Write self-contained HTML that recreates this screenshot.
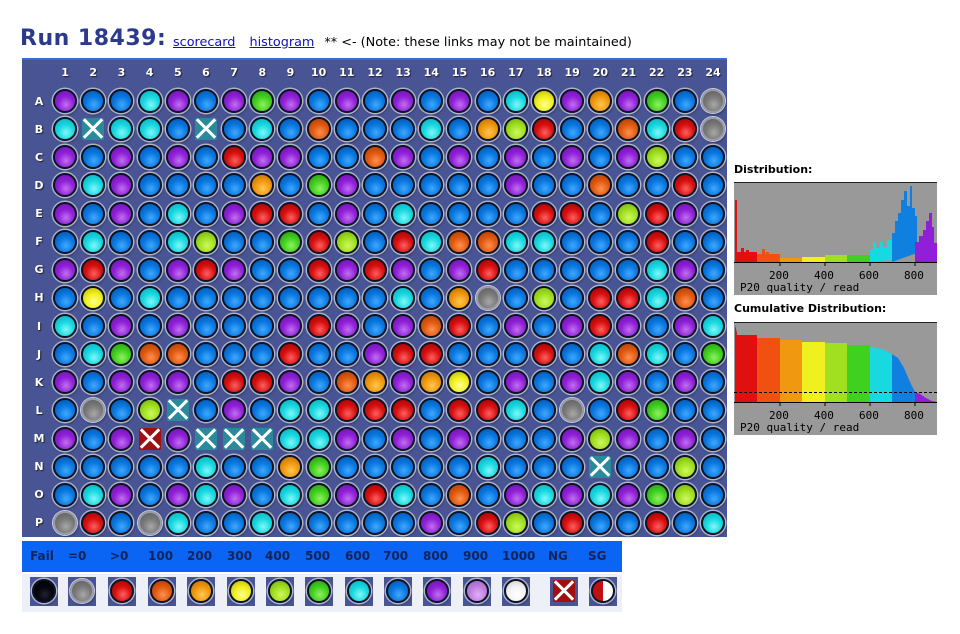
<!DOCTYPE html><html><head><meta charset="utf-8"><style>
body{margin:0;width:960px;height:634px;background:#fff;position:relative;overflow:hidden;font-family:"DejaVu Sans","Liberation Sans",sans-serif}
.t{position:absolute;left:20px;top:26px;font-size:22px;font-weight:bold;color:#2b3a8c;letter-spacing:0.5px}
.lk{position:absolute;left:173px;top:35px;font-size:12.8px;color:#000;white-space:nowrap}
.lk a{color:#1010c0;text-decoration:underline;margin-right:10px}
.pn{position:absolute;left:22px;top:58px;width:705px;height:479px;background:#485493;border-top:2px solid #3a6ad8;box-sizing:border-box}
.hd{position:absolute;top:66px;left:51px;display:grid;grid-template-columns:repeat(24,28.18px);color:#fff;font-weight:bold;font-size:11px;text-align:center;text-shadow:1px 1px 1px #223}
.rl{position:absolute;left:32px;top:87px;display:grid;grid-auto-rows:28.13px;color:#fff;font-weight:bold;font-size:11px;width:14px;text-align:center;align-items:center;text-shadow:1px 1px 1px #223}
.g{position:absolute;left:51px;top:87px;display:grid;grid-template-columns:repeat(24,28.18px);grid-auto-rows:28.13px}
.g i,.lg i{display:block;width:24px;height:24px;margin:2px;border-radius:50%;box-sizing:border-box;border:2px solid #0d1424;box-shadow:0 0 0 1.5px #aeb4cc,1px 2px 2px rgba(0,0,0,.35);background:radial-gradient(circle at 55% 68%,var(--l) 0,var(--c) 45%,var(--k) 100%);position:relative}
.p{--c:#9020d8;--l:#c070f0;--k:#6a10a8}
.b{--c:#0a78e0;--l:#40a8ff;--k:#0050a8}
.c{--c:#18d8e0;--l:#80f8f8;--k:#0aa8b8}
.g .gg,.gg{--c:#40d020;--l:#90f060;--k:#289010}
.l{--c:#a0e020;--l:#d0f860;--k:#70a810}
.y{--c:#f0f020;--l:#ffff90;--k:#b8b000}
.o{--c:#f09810;--l:#ffc850;--k:#b86800}
.r{--c:#e05a10;--l:#ff9050;--k:#a83800}
.d{--c:#d81010;--l:#ff6060;--k:#980000}
.g i.s,.lg i.s{border:2px solid #9a9ca8;--c:#7a7a7a;--l:#a8a8a8;--k:#5a5a5a;box-shadow:0 0 0 1px #ccd,1px 2px 2px rgba(0,0,0,.35)}
.g i.x,.g i.z,.lg i.z{border-radius:2px;border:none;box-shadow:none;background:#2a8a9c;width:22px;height:22px;margin:3px}
.g i.z,.lg i.z{background:#a01010}
.g i.x::before,.g i.x::after,.g i.z::before,.g i.z::after,.lg i.z::before,.lg i.z::after{content:"";position:absolute;left:-2px;top:9px;width:26px;height:3px;background:#fff;transform:rotate(45deg)}
.g i.x::after,.g i.z::after,.lg i.z::after{transform:rotate(-45deg)}
.lb{position:absolute;left:22px;top:541px;width:600px;height:31px;background:#0a64f4}
.lb span{position:absolute;top:8px;font-size:12px;font-weight:bold;color:#13235a}
.lr{position:absolute;left:22px;top:574px;width:600px;height:38px;background:#eef0f8}
.lg{position:absolute;top:577px;width:28px;height:29px;background:#485493}
.lg i{margin:2px}
.k0{--c:#050510;--l:#202030;--k:#000}
.w9{--c:#c080e0;--l:#e0b0f8;--k:#9860b8}
.wh{--c:#f4f4f4;--l:#fff;--k:#c8c8c8}
.sg{background:linear-gradient(90deg,#c01010 50%,#fff 50%)!important}
.cap{position:absolute;left:734px;font-size:11px;font-weight:bold;color:#000}
svg text{font-family:"DejaVu Sans Mono","Liberation Mono",monospace;font-size:11px}
</style></head><body>
<div class="t">Run 18439:</div>
<div class="lk"><a>scorecard</a> <a>histogram</a>** &lt;- (Note: these links may not be maintained)</div>
<div class="pn"></div>
<div class="hd"><span>1</span><span>2</span><span>3</span><span>4</span><span>5</span><span>6</span><span>7</span><span>8</span><span>9</span><span>10</span><span>11</span><span>12</span><span>13</span><span>14</span><span>15</span><span>16</span><span>17</span><span>18</span><span>19</span><span>20</span><span>21</span><span>22</span><span>23</span><span>24</span></div>
<div class="rl"><span>A</span><span>B</span><span>C</span><span>D</span><span>E</span><span>F</span><span>G</span><span>H</span><span>I</span><span>J</span><span>K</span><span>L</span><span>M</span><span>N</span><span>O</span><span>P</span></div>
<div class="g">
<i class=p></i><i class=b></i><i class=b></i><i class=c></i><i class=p></i><i class=b></i><i class=p></i><i class=gg></i><i class=p></i><i class=b></i><i class=p></i><i class=b></i><i class=p></i><i class=b></i><i class=p></i><i class=b></i><i class=c></i><i class=y></i><i class=p></i><i class=o></i><i class=p></i><i class=gg></i><i class=b></i><i class=s></i>
<i class=c></i><i class=x></i><i class=c></i><i class=c></i><i class=b></i><i class=x></i><i class=b></i><i class=c></i><i class=b></i><i class=r></i><i class=b></i><i class=b></i><i class=b></i><i class=c></i><i class=b></i><i class=o></i><i class=l></i><i class=d></i><i class=b></i><i class=b></i><i class=r></i><i class=c></i><i class=d></i><i class=s></i>
<i class=p></i><i class=b></i><i class=p></i><i class=b></i><i class=p></i><i class=b></i><i class=d></i><i class=p></i><i class=p></i><i class=b></i><i class=b></i><i class=r></i><i class=p></i><i class=b></i><i class=p></i><i class=b></i><i class=p></i><i class=b></i><i class=p></i><i class=b></i><i class=p></i><i class=l></i><i class=b></i><i class=b></i>
<i class=p></i><i class=c></i><i class=p></i><i class=b></i><i class=b></i><i class=b></i><i class=b></i><i class=o></i><i class=b></i><i class=gg></i><i class=p></i><i class=b></i><i class=b></i><i class=b></i><i class=b></i><i class=b></i><i class=p></i><i class=b></i><i class=b></i><i class=r></i><i class=b></i><i class=b></i><i class=d></i><i class=b></i>
<i class=p></i><i class=b></i><i class=p></i><i class=b></i><i class=c></i><i class=b></i><i class=p></i><i class=d></i><i class=d></i><i class=b></i><i class=p></i><i class=b></i><i class=c></i><i class=b></i><i class=b></i><i class=b></i><i class=b></i><i class=d></i><i class=d></i><i class=b></i><i class=l></i><i class=d></i><i class=p></i><i class=b></i>
<i class=b></i><i class=c></i><i class=b></i><i class=b></i><i class=c></i><i class=l></i><i class=b></i><i class=b></i><i class=gg></i><i class=d></i><i class=l></i><i class=b></i><i class=d></i><i class=c></i><i class=r></i><i class=r></i><i class=c></i><i class=c></i><i class=b></i><i class=b></i><i class=b></i><i class=d></i><i class=b></i><i class=b></i>
<i class=p></i><i class=d></i><i class=p></i><i class=b></i><i class=p></i><i class=d></i><i class=p></i><i class=b></i><i class=b></i><i class=d></i><i class=p></i><i class=d></i><i class=p></i><i class=b></i><i class=p></i><i class=d></i><i class=b></i><i class=b></i><i class=b></i><i class=b></i><i class=b></i><i class=c></i><i class=p></i><i class=b></i>
<i class=b></i><i class=y></i><i class=b></i><i class=c></i><i class=b></i><i class=b></i><i class=b></i><i class=b></i><i class=b></i><i class=b></i><i class=b></i><i class=b></i><i class=c></i><i class=b></i><i class=o></i><i class=s></i><i class=b></i><i class=l></i><i class=b></i><i class=d></i><i class=d></i><i class=c></i><i class=r></i><i class=b></i>
<i class=c></i><i class=b></i><i class=p></i><i class=b></i><i class=p></i><i class=b></i><i class=b></i><i class=b></i><i class=p></i><i class=d></i><i class=p></i><i class=b></i><i class=p></i><i class=r></i><i class=d></i><i class=b></i><i class=p></i><i class=b></i><i class=p></i><i class=d></i><i class=p></i><i class=b></i><i class=p></i><i class=c></i>
<i class=b></i><i class=c></i><i class=gg></i><i class=r></i><i class=r></i><i class=b></i><i class=b></i><i class=b></i><i class=d></i><i class=b></i><i class=b></i><i class=p></i><i class=d></i><i class=d></i><i class=b></i><i class=b></i><i class=b></i><i class=d></i><i class=b></i><i class=c></i><i class=r></i><i class=c></i><i class=b></i><i class=gg></i>
<i class=p></i><i class=b></i><i class=p></i><i class=p></i><i class=p></i><i class=b></i><i class=d></i><i class=d></i><i class=p></i><i class=b></i><i class=r></i><i class=o></i><i class=p></i><i class=o></i><i class=y></i><i class=b></i><i class=p></i><i class=b></i><i class=p></i><i class=c></i><i class=p></i><i class=b></i><i class=p></i><i class=b></i>
<i class=b></i><i class=s></i><i class=b></i><i class=l></i><i class=x></i><i class=b></i><i class=p></i><i class=b></i><i class=c></i><i class=c></i><i class=d></i><i class=d></i><i class=d></i><i class=b></i><i class=d></i><i class=d></i><i class=c></i><i class=b></i><i class=s></i><i class=b></i><i class=d></i><i class=gg></i><i class=b></i><i class=b></i>
<i class=p></i><i class=b></i><i class=p></i><i class=z></i><i class=p></i><i class=x></i><i class=x></i><i class=x></i><i class=c></i><i class=c></i><i class=p></i><i class=b></i><i class=p></i><i class=b></i><i class=p></i><i class=b></i><i class=b></i><i class=b></i><i class=p></i><i class=l></i><i class=p></i><i class=b></i><i class=p></i><i class=b></i>
<i class=b></i><i class=b></i><i class=b></i><i class=b></i><i class=b></i><i class=c></i><i class=b></i><i class=b></i><i class=o></i><i class=gg></i><i class=b></i><i class=b></i><i class=b></i><i class=b></i><i class=b></i><i class=c></i><i class=b></i><i class=b></i><i class=b></i><i class=x></i><i class=b></i><i class=b></i><i class=l></i><i class=b></i>
<i class=b></i><i class=c></i><i class=p></i><i class=b></i><i class=p></i><i class=c></i><i class=p></i><i class=b></i><i class=c></i><i class=gg></i><i class=p></i><i class=d></i><i class=c></i><i class=b></i><i class=r></i><i class=b></i><i class=p></i><i class=c></i><i class=p></i><i class=c></i><i class=p></i><i class=gg></i><i class=l></i><i class=b></i>
<i class=s></i><i class=d></i><i class=b></i><i class=s></i><i class=c></i><i class=b></i><i class=b></i><i class=c></i><i class=b></i><i class=b></i><i class=b></i><i class=b></i><i class=b></i><i class=p></i><i class=b></i><i class=d></i><i class=l></i><i class=b></i><i class=d></i><i class=b></i><i class=b></i><i class=d></i><i class=b></i><i class=c></i>
</div>
<div class="lb"><span style="left:8px">Fail</span><span style="left:46px">=0</span><span style="left:88px">&gt;0</span><span style="left:126px">100</span><span style="left:165px">200</span><span style="left:205px">300</span><span style="left:243px">400</span><span style="left:283px">500</span><span style="left:323px">600</span><span style="left:361px">700</span><span style="left:401px">800</span><span style="left:441px">900</span><span style="left:480px">1000</span><span style="left:526px">NG</span><span style="left:566px">SG</span></div>
<div class="lr"></div>
<div class="lg" style="left:30px"><i class=k0></i></div>
<div class="lg" style="left:68px"><i class=s></i></div>
<div class="lg" style="left:108px"><i class=d></i></div>
<div class="lg" style="left:148px"><i class=r></i></div>
<div class="lg" style="left:187px"><i class=o></i></div>
<div class="lg" style="left:227px"><i class=y></i></div>
<div class="lg" style="left:266px"><i class=l></i></div>
<div class="lg" style="left:305px"><i class=gg></i></div>
<div class="lg" style="left:345px"><i class=c></i></div>
<div class="lg" style="left:384px"><i class=b></i></div>
<div class="lg" style="left:423px"><i class=p></i></div>
<div class="lg" style="left:463px"><i class=w9></i></div>
<div class="lg" style="left:502px"><i class=wh></i></div>
<div class="lg" style="left:550px"><i class=z></i></div>
<div class="lg" style="left:589px"><i class="d sg"></i></div>
<div class="cap" style="top:163px">Distribution:</div>
<div class="cap" style="top:302px">Cumulative Distribution:</div>
<svg style="position:absolute;left:0;top:0" width="960" height="634">
<rect x="734" y="182" width="203" height="113" fill="#999"/>
<line x1="734" y1="182.5" x2="937" y2="182.5" stroke="#222"/>
<g fill="#e01010"><rect x="735" y="200" width="2" height="62"/><rect x="737" y="252" width="20" height="10"/><rect x="741" y="248" width="3" height="14"/><rect x="746" y="250" width="3" height="12"/></g>
<g fill="#f05010"><rect x="757" y="254" width="23" height="8"/><rect x="762" y="249" width="3" height="13"/><rect x="766" y="252" width="3" height="10"/></g>
<rect x="780" y="258" width="22" height="4" fill="#f09810"/>
<rect x="802" y="257" width="23" height="5" fill="#f0f020"/>
<rect x="825" y="255" width="22" height="7" fill="#a0e020"/>
<rect x="847" y="255" width="23" height="7" fill="#40d020"/>
<path d="M870 262V250h3v-8h3v6h4v-6h3v5h4v-7h5v20z" fill="#18d8e0"/>
<path d="M892 262V233h3v-12h3v-8h3v-13h3v-9h3v15h3v-20h2v22h3v8h2v37z" fill="#1080e0"/>
<path d="M915 262V242h4v-6h4v-6h3v-9h3v-8h3v14h2v16h3v19z" fill="#9020d8"/>
<line x1="734" y1="262.5" x2="937" y2="262.5" stroke="#000"/>
<g stroke="#000"><line x1="780" y1="262" x2="780" y2="266"/><line x1="825" y1="262" x2="825" y2="266"/><line x1="870" y1="262" x2="870" y2="266"/><line x1="915" y1="262" x2="915" y2="266"/></g>
<text x="769" y="279">200</text><text x="814" y="279">400</text><text x="859" y="279">600</text><text x="904" y="279">800</text>
<text x="740" y="291">P20 quality / read</text>
<rect x="734" y="322" width="203" height="113" fill="#999"/>
<line x1="734" y1="322.5" x2="937" y2="322.5" stroke="#222"/>
<rect x="735" y="335" width="22" height="67" fill="#e01010"/>
<rect x="757" y="338" width="23" height="64" fill="#f05010"/>
<rect x="780" y="340" width="22" height="62" fill="#f09810"/>
<rect x="802" y="342" width="23" height="60" fill="#f0f020"/>
<rect x="825" y="343" width="22" height="59" fill="#a0e020"/>
<rect x="847" y="345" width="23" height="57" fill="#40d020"/>
<path d="M870 402V347l12 2 10 5v48z" fill="#18d8e0"/>
<path d="M892 402V354l6 4 6 10 6 14 5 10v10z" fill="#1080e0"/>
<path d="M915 402V392l5 2 6 4 6 3 5 1z" fill="#9020d8"/>
<path d="M735 402V325l2 8z" fill="#e01010"/>
<line x1="734" y1="392.5" x2="937" y2="392.5" stroke="#000" stroke-dasharray="3,2"/>
<line x1="734" y1="402.5" x2="937" y2="402.5" stroke="#000"/>
<g stroke="#000"><line x1="780" y1="402" x2="780" y2="406"/><line x1="825" y1="402" x2="825" y2="406"/><line x1="870" y1="402" x2="870" y2="406"/><line x1="915" y1="402" x2="915" y2="406"/></g>
<text x="769" y="419">200</text><text x="814" y="419">400</text><text x="859" y="419">600</text><text x="904" y="419">800</text>
<text x="740" y="431">P20 quality / read</text>
</svg>
</body></html>
